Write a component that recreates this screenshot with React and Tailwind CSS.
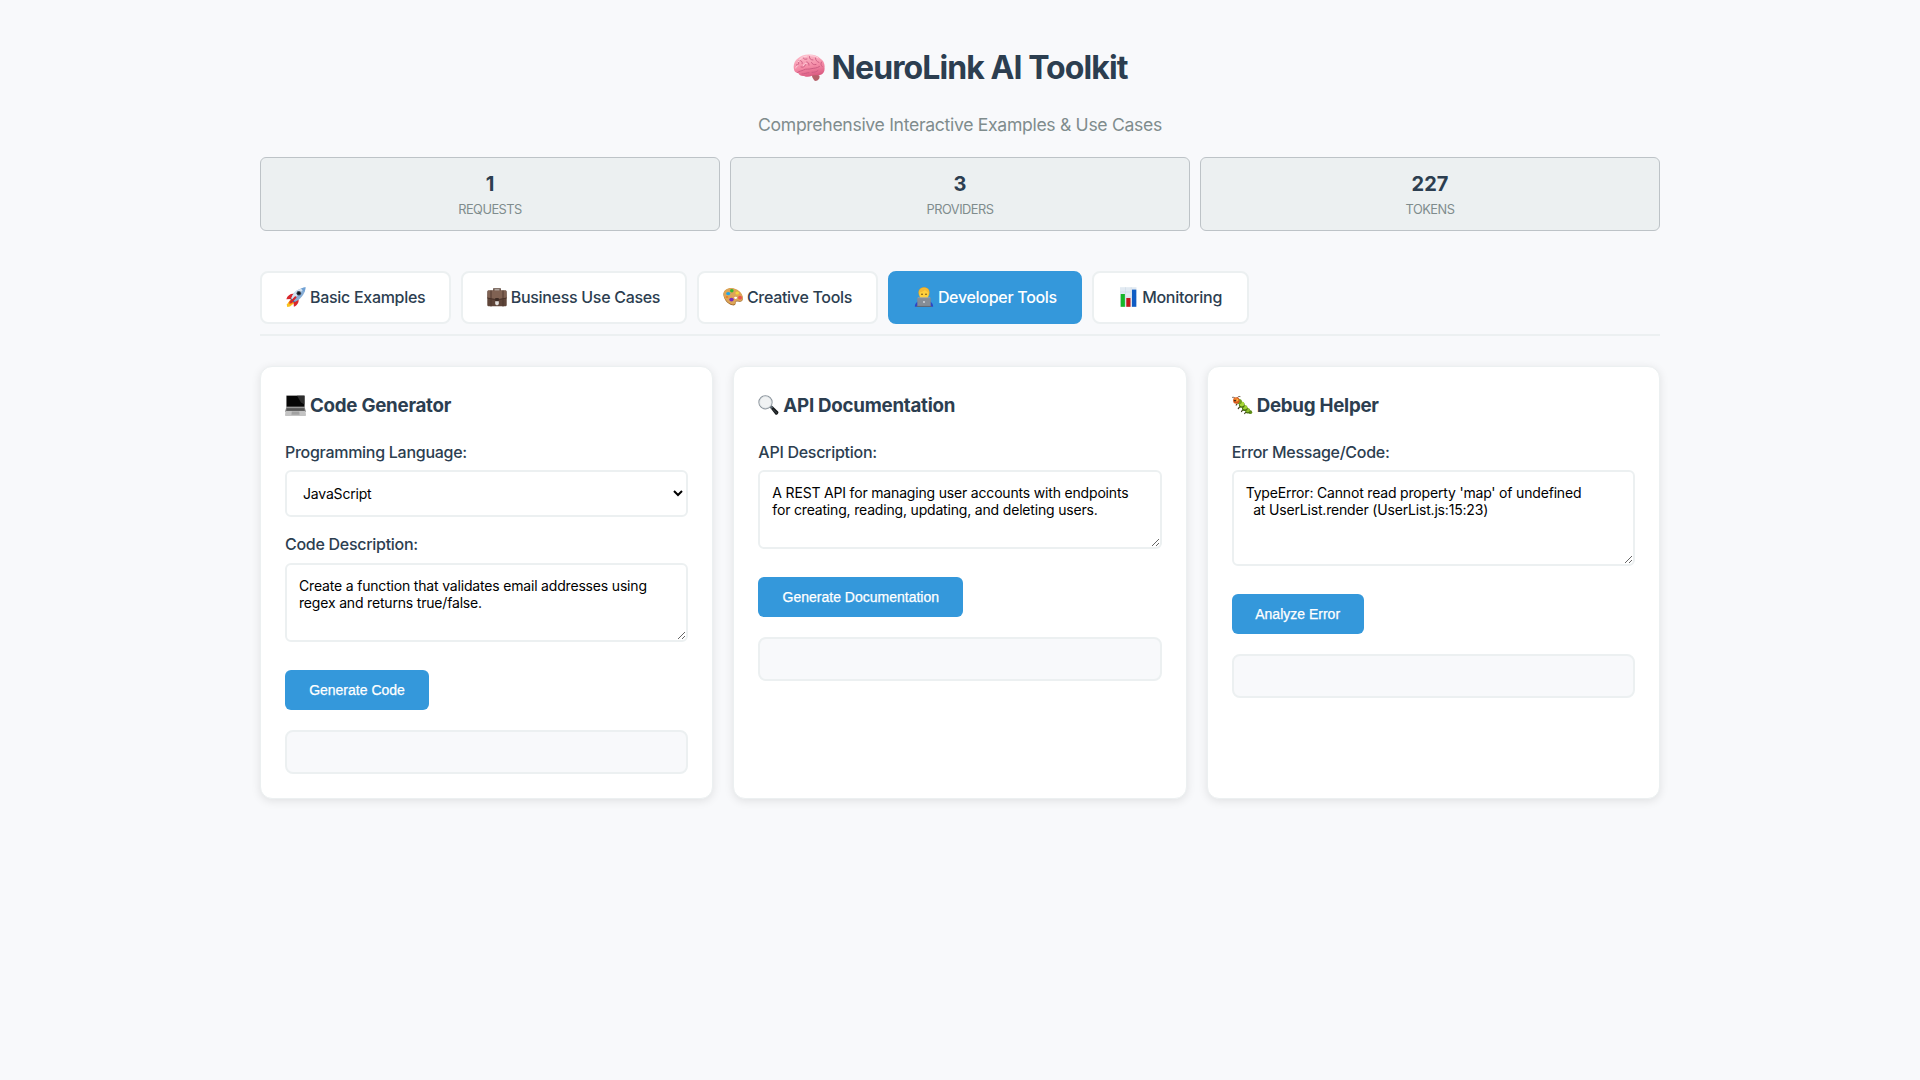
function Brain({ className }) {
  return (
    <svg viewBox="0 0 32 28" className={className} aria-hidden="true">
      <defs>
        <linearGradient id="brainFill" x1="0.3" y1="0" x2="0.6" y2="1">
          <stop offset="0" stopColor="#fdbecb" />
          <stop offset="0.55" stopColor="#f48ba6" />
          <stop offset="1" stopColor="#d9587f" />
        </linearGradient>
      </defs>
      <path d="M18.5 20.5C21 19.8 25.5 20 26.5 22c.5 2.500-1.500 4.800-4 5-1.500-.4-3-2.500-4-6.500z" fill="#b5606a" />
      <path d="M1 15.500C-.2 11 1.800 6.500 5 4.300 7.500 1.500 12 .2 16 .4c4-.2 9 1.200 11.300 4C30.500 6.300 32 10 31.500 13.500c.5 3.500-1 6.800-4.500 7.500-2.500.8-5.500-.3-8 .7-2.500 1.300-5.500 1.500-8 .2C8.500 22.300 6 21 5.200 19 3 19 1.300 17.500 1 15.500z" fill="url(#brainFill)" />
      <g fill="none" stroke="#c95a80" strokeWidth="0.9" strokeLinecap="round">
        <path d="M4.500 18.500c2-1.800 4.200-1.300 6-2.500 2.500-1.500 5-.5 7.500-1.200 3-.8 5.500-.3 8.500-2.300" />
        <path d="M3.500 11c1.500.5 2.500-1 2.200-2.500M6 6.500c2.500 0 3.500 1 3.200 3M10 3.500c.5 2 2.500 2 4 1.500M16.500 2.500c-.3 2.500 1.500 3.500 3.500 3.500M22.500 4c0 2 1 3.500 3.500 4.500M8 13c2 .8 3.800-.3 4.500-2.200M13.500 8c1.700 0 2.600 1.200 2.500 3.200M18.500 8.500c.8 2 2.500 2.500 4.500 2M28.500 8c-1 1.500-.8 3 .7 4.500" />
        <path d="M9 20c2.500.3 4.500-1.500 7-1.300M19 18.300c2.300 0 4.500-.3 6-1.800" />
      </g>
      <path d="M5.500 7.500C7 4 11 2 14 2M17 1.700c3-.2 6 .8 8 2.200M2.800 14c.2-1.200.8-2 2-2.300M10.500 11.800c.5-2 1.500-2.600 3-2.600" fill="none" stroke="#ffdce4" strokeWidth="0.8" strokeLinecap="round" />
    </svg>
  );
}

function Rocket({ className }) {
  return (
    <svg viewBox="0 0 20 20" className={className} aria-hidden="true">
      <path d="M5 12 .8 17.500 1.200 20 4 19.400 9 15.500z" fill="#f9c21c" />
      <path d="M5 12 2.600 15.400l1.200 2.200 4-2z" fill="#f2661f" />
      <path d="M8.500 7C5 6.300 1.600 8.200.3 12.200l5.200-.2zM12.500 12c.7 3.300-1 6.300-4.600 7.800l-.4-5z" fill="#d8262c" />
      <path d="M4.800 13C6 7 11 1.500 19.500.3 19.300 7.500 13.500 13.700 7.500 15.300z" fill="#86add6" />
      <path d="M4.800 13C6 7 11 1.500 19.500.3L6 14.200z" fill="#d3e2ef" />
      <path d="M15 1.600c1.300-.6 2.800-1 4.500-1.300-.2 1.700-.6 3.200-1.200 4.600z" fill="#6fa0d4" />
      <circle cx="12.800" cy="6.300" r="2.300" fill="#3c4654" />
      <circle cx="12.800" cy="6.300" r="1.300" fill="#0d1420" />
      <path d="M4.800 13 7.500 15.300 9 14.700 5.300 11.200z" fill="#3b6ba6" />
      <path d="m5 15 4.500-4.800" stroke="#d2252b" strokeWidth="2" strokeLinecap="round" />
    </svg>
  );
}

function Briefcase({ className }) {
  return (
    <svg viewBox="0 0 20 20" className={className} aria-hidden="true">
      <path d="M6.800 4V1.800h6.400V4" fill="none" stroke="#5b4438" strokeWidth="1.300" />
      <rect x="0.300" y="3.500" width="19.400" height="15.800" rx="1.200" fill="#5f4539" />
      <path d="M1 3.500h18l.6 7.500-7 1.300H7.400L.4 11z" fill="#806253" />
      <path d="M.4 11l7 1.300h5.200l7-1.300" fill="none" stroke="#3d2a22" strokeWidth="0.800" />
      <path d="M4 3.500v16M16 3.500v16" stroke="#4d372d" strokeWidth="0.900" />
      <rect x="8.300" y="11" width="3.400" height="3.200" fill="#3e2c24" />
      <path d="M8.200 14.200h3.600v3l-1.800 1.300-1.800-1.300z" fill="#e5e2df" />
    </svg>
  );
}

function Palette({ className }) {
  return (
    <svg viewBox="0 0 20 20" className={className} aria-hidden="true">
      <path d="M.5 8C.2 4 4 1.300 8.500 1.500c5.500.3 10.800 4.500 11.300 9.500.3 3-1.600 4.300-3.800 3.700-2-.5-3.500-.2-3.400 1.300.1 1.700-1.300 2.800-3.300 2.300C4.500 17.200 1 12.500.5 8z" fill="#9c6528" />
      <path d="M.5 7.300C.2 3.500 4 .8 8.500 1c5.500.3 10.800 4.500 11.300 9.300.3 3-1.600 4.200-3.800 3.600-2-.5-3.500-.2-3.400 1.300.1 1.700-1.300 2.700-3.300 2.200C4.500 16.400 1 11.800.5 7.300z" fill="#dda557" />
      <circle cx="8.800" cy="3.700" r="1.800" fill="#35b934" />
      <ellipse cx="5.200" cy="6.600" rx="2.100" ry="1.700" fill="#20a5e8" />
      <ellipse cx="14.200" cy="6" rx="1.800" ry="1.600" fill="#f4d83b" />
      <ellipse cx="8.500" cy="12.600" rx="2.200" ry="1.900" fill="#7b2bbd" />
      <ellipse cx="17" cy="10.700" rx="2" ry="1.900" fill="#e9544d" />
      <ellipse cx="12.600" cy="10.800" rx="1.500" ry="1.100" fill="#fff" />
      <ellipse cx="4" cy="10" rx="1.300" ry="1" fill="#e97f26" />
    </svg>
  );
}

function Technologist({ className }) {
  return (
    <svg viewBox="0 0 20 20" className={className} aria-hidden="true">
      <path d="M.8 19.700C1 15.500 4 13.800 7 13.500h6c3 .3 6 2 6.200 6.200z" fill="#2b46c8" />
      <rect x="7.500" y="10" width="5" height="4" fill="#e5a71c" />
      <path d="M4.500 6.500C4 2.500 6.500.2 10 .2s6 2.300 5.500 6.300L15 8.500H5z" fill="#e0a021" />
      <path d="M5.300 5.500C5.800 3.500 8 2.800 10 2.800s4.200.7 4.700 2.700c.5 4-1.500 7.500-4.700 7.500S4.800 9.500 5.300 5.500z" fill="#ffd03c" />
      <path d="M4.700 5.500C5.300 2 7.500.8 10.500.8s4.500 1.700 4.800 4.700C13.500 5 12 4.200 11 3 9.500 4.700 7 5.300 4.700 5.500z" fill="#f5bb35" />
      <circle cx="8" cy="7.300" r="0.750" fill="#4e3513" />
      <circle cx="12" cy="7.300" r="0.750" fill="#4e3513" />
      <rect x="3.300" y="10.500" width="13.400" height="9" rx="0.800" fill="#858d96" />
      <path d="M3.800 10.700h12.400" stroke="#a9b0b8" strokeWidth="0.500" />
      <circle cx="10" cy="15" r="0.900" fill="#d8dde2" />
      <rect x="2.500" y="18.900" width="15" height="1" fill="#616971" />
    </svg>
  );
}

function BarChart({ className }) {
  return (
    <svg viewBox="0 0 20 20" className={className} aria-hidden="true">
      <rect x="2" y="0.200" width="16.500" height="19.600" fill="#e2eaf2" />
      <path d="M2 5h16.500M2 10h16.500M2 15h16.500M7.500.2v19.600M13.200.2v19.600" stroke="#c9d6e3" strokeWidth="0.500" />
      <rect x="2.700" y="7" width="4.200" height="12.800" fill="#16b52a" />
      <rect x="8.300" y="11" width="4.200" height="8.800" fill="#c4161c" />
      <rect x="14" y="2.600" width="4.300" height="17.200" fill="#0f5cc4" />
    </svg>
  );
}

function Laptop({ className }) {
  return (
    <svg viewBox="0 0 21 21" className={className} aria-hidden="true">
      <path d="M1.200.5h18.600v12.200H1.200z" fill="#8f8f8f" />
      <path d="M1.700.8h17.600v10.800H1.700z" fill="#060606" />
      <path d="M12 .8h7.300v8.700L16 7.500z" fill="#2d2d2d" />
      <path d="M1.200 12.500h18.600L21 17H0z" fill="#808080" />
      <path d="M2 13.300h17l.6 2.400H1.400z" fill="#575757" />
      <path d="M.5 15.900h20l.5 4.300c0 .5-.3.800-.8.800H.8c-.5 0-.8-.3-.8-.800z" fill="#c3c3c3" />
      <path d="M6.800 16.500h7.400l.4 3.200H6.400z" fill="#a1a1a1" />
    </svg>
  );
}

function Magnifier({ className }) {
  return (
    <svg viewBox="0 0 21 21" className={className} aria-hidden="true">
      <path d="m11.800 12.300 2-1.700 6.300 6c1.200 1.300-1.200 4-2.700 3z" fill="#15181a" />
      <path d="m11.500 12 1.800-1.700 2 1.800-1.900 1.900z" fill="#5c6770" />
      <circle cx="7.500" cy="7.300" r="6.600" fill="#f0f2f3" stroke="#8b949c" strokeWidth="1.100" />
      <circle cx="7.500" cy="7.300" r="5.800" fill="none" stroke="#d5dade" strokeWidth="0.600" />
      <path d="m15 14.500 3.700 3.500" stroke="#59656e" strokeWidth="0.700" strokeLinecap="round" />
    </svg>
  );
}

function Caterpillar({ className }) {
  return (
    <svg viewBox="0 0 21 21" className={className} aria-hidden="true">
      <path d="M3.500 4C3 2.500 1.800 2 .5 2.300M5 3.300c.5-1.500 1.600-2.100 3-1.800" fill="none" stroke="#54402e" strokeWidth="0.800" strokeLinecap="round" />
      <g stroke="#3f3a18" strokeWidth="1.200" strokeLinecap="round">
        <path d="m5 9-.8 1M7.500 12.200l-1.200 1.300M10.500 15.200l-1 1.300M13.500 17.500l-.8 1" />
      </g>
      <circle cx="18.300" cy="17.200" r="1.900" fill="#5f8f1a" />
      <circle cx="15.800" cy="16" r="2.500" fill="#476f12" />
      <circle cx="15.800" cy="15.200" r="2.100" fill="#8cbf28" />
      <circle cx="12.800" cy="13.200" r="2.800" fill="#476f12" />
      <circle cx="12.900" cy="12.300" r="2.300" fill="#9dd032" />
      <circle cx="9.800" cy="9.900" r="2.900" fill="#476f12" />
      <circle cx="9.900" cy="9" r="2.400" fill="#a7d838" />
      <circle cx="7.300" cy="6.600" r="2.600" fill="#6f9d1d" />
      <circle cx="4.300" cy="5.500" r="3.200" fill="#dc5a1e" />
      <circle cx="4" cy="4.900" r="2.100" fill="#f08532" />
      <circle cx="3" cy="5.600" r="0.900" fill="#241a10" />
      <circle cx="5.600" cy="5" r="0.800" fill="#ffe04a" />
    </svg>
  );
}

const stats = [
  { value: "1", label: "REQUESTS" },
  { value: "3", label: "PROVIDERS" },
  { value: "227", label: "TOKENS" },
];

const tabs = [
  { Icon: Rocket, label: "Basic Examples", width: "w-[190.7px]" },
  { Icon: Briefcase, label: "Business Use Cases", width: "w-[226.2px]" },
  { Icon: Palette, label: "Creative Tools", width: "w-[181px]" },
  { Icon: Technologist, label: "Developer Tools", width: "w-[194.3px]", active: true },
  { Icon: BarChart, label: "Monitoring", width: "w-[156.5px]" },
];

const fieldClass =
  "block w-full rounded-md border-2 border-[#ecf0f1] bg-white p-3 text-[14px] text-black tracking-[-0.18px]";

function Label({ children, className = "h-[26px] leading-[26px]" }) {
  return (
    <label className={`${className} mb-[5px] block whitespace-nowrap text-[16px] font-medium tracking-[-0.28px]`}>
      {children}
    </label>
  );
}

function TextArea({ rows, value }) {
  return <textarea rows={rows} defaultValue={value} spellCheck={false} className={`${fieldClass} resize-y leading-[17px]`} />;
}

function Card({ Icon, title, button, buttonWidth, children }) {
  return (
    <section className="rounded-xl border border-[#ecf0f1] bg-white p-6 shadow-[0_2px_10px_rgba(0,0,0,0.1)]">
      <h3 className="mb-[19px] flex h-[29px] items-center gap-[4px] whitespace-nowrap text-[18.72px] font-bold leading-[29px] tracking-[-0.25px]">
        <Icon className="size-[21px] shrink-0" />
        {title}
      </h3>
      {children}
      <button
        className={`${buttonWidth} mt-7 flex h-10 items-center justify-center whitespace-nowrap rounded-md bg-[#3498db] font-['Liberation_Sans',Arial,sans-serif] text-[14px] text-white [-webkit-text-stroke:0.25px_white]`}
      >
        {button}
      </button>
      <div className="mt-5 h-11 rounded-lg border-2 border-[#ecf0f1] bg-[#f8f9fb]" />
    </section>
  );
}

export default function App() {
  return (
    <div className="min-h-screen bg-[#f8f9fb] font-['Inter',sans-serif] text-[#2c3e50]">
      <div className="mx-auto w-[1400px] pt-[42px]">
        <header className="flex flex-col items-center">
          <h1 className="flex h-[51px] items-center gap-[7px] whitespace-nowrap text-[32px] font-bold leading-[51px] tracking-[-0.92px]">
            <Brain className="h-7 w-8 shrink-0" />
            NeuroLink AI Toolkit
          </h1>
          <p className="mt-[18px] h-7 whitespace-nowrap text-[17.6px] leading-7 tracking-[-0.31px] text-[#7f8c8d]">
            Comprehensive Interactive Examples &amp; Use Cases
          </p>
        </header>

        <div className="mt-[18px] grid grid-cols-3 gap-[10px]">
          {stats.map((s) => (
            <div key={s.label} className="h-[74px] rounded-md border border-[#bdc3c7] bg-[#ecf0f1] pt-[11px] text-center">
              <div className="text-[20px] font-bold leading-[31px]">{s.value}</div>
              <div className="text-[12.8px] leading-5 tracking-[-0.5px] text-[#7f8c8d]">{s.label}</div>
            </div>
          ))}
        </div>

        <nav className="mt-10 flex gap-[10px] border-b-2 border-[#ecf0f1] pb-[10px]">
          {tabs.map(({ Icon, label, width, active }) => (
            <button
              key={label}
              className={`${width} flex h-[53px] shrink-0 items-center gap-1 whitespace-nowrap rounded-lg border-2 pb-[2px] pl-6 text-[16px] font-medium tracking-[-0.3px] ${
                active ? "border-[#3498db] bg-[#3498db] text-white" : "border-[#ecf0f1] bg-white"
              }`}
            >
              <Icon className="size-5 shrink-0" />
              {label}
            </button>
          ))}
        </nav>

        <main className="mt-[30px] grid grid-cols-3 gap-5">
          <Card Icon={Laptop} title="Code Generator" button="Generate Code" buttonWidth="w-36">
            <Label>Programming Language:</Label>
            <select className={`${fieldClass} mb-[15px] h-[47px] py-0`} defaultValue="JavaScript">
              <option>JavaScript</option>
            </select>
            <Label className="h-[26px] leading-6">Code Description:</Label>
            <TextArea rows={3} value="Create a function that validates email addresses using regex and returns true/false." />
          </Card>
          <Card Icon={Magnifier} title="API Documentation" button="Generate Documentation" buttonWidth="w-[205px]">
            <Label>API Description:</Label>
            <TextArea
              rows={3}
              value="A REST API for managing user accounts with endpoints for creating, reading, updating, and deleting users."
            />
          </Card>
          <Card Icon={Caterpillar} title="Debug Helper" button="Analyze Error" buttonWidth="w-[132px]">
            <Label>Error Message/Code:</Label>
            <TextArea
              rows={4}
              value={"TypeError: Cannot read property 'map' of undefined\n  at UserList.render (UserList.js:15:23)"}
            />
          </Card>
        </main>
      </div>
    </div>
  );
}
